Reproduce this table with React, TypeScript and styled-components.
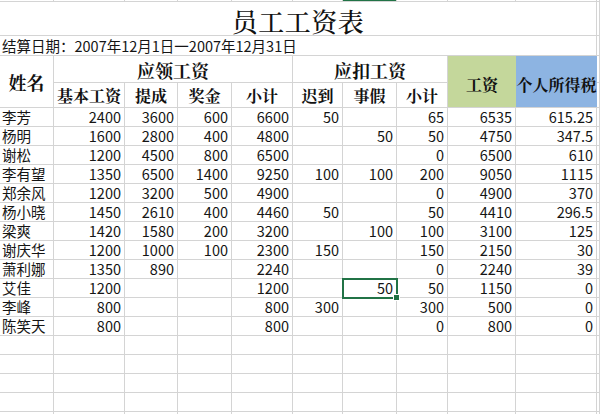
import React from "react";
import styled, { createGlobalStyle, css } from "styled-components";

const GlobalStyle = createGlobalStyle`
  html, body { margin: 0; padding: 0; background: #ffffff; }
  body {
    font-family: "Noto Sans CJK SC", "Noto Sans", sans-serif;
    color: #111111;
  }
`;

const GRID = "#d4d4d4";
const EXCEL_GREEN = "#217346";

const Sheet = styled.div`
  display: grid;
  grid-template-columns: 54px 71px 53px 54px 61px 50px 54px 51px 68px 81px 1fr;
  grid-template-rows: 2px 34px 20px 27px 25px repeat(17, 19px);
  width: 600px;
  height: 414px;
  overflow: hidden;
  background: #ffffff;
`;

type Align = "left" | "right" | "center";

const Cell = styled.div<{ $align?: Align; $selected?: boolean }>`
  box-sizing: border-box;
  border-right: 1px solid ${GRID};
  border-bottom: 1px solid ${GRID};
  display: flex;
  align-items: center;
  justify-content: ${(p) =>
    p.$align === "right" ? "flex-end" : p.$align === "center" ? "center" : "flex-start"};
  padding: ${(p) => (p.$align === "right" ? "1px 3px 0 0" : "1px 0 0 2px")};
  min-width: 0;
  white-space: nowrap;
  font-size: 14.5px;
  line-height: 1;
  color: #151515;
  ${(p) =>
    p.$selected &&
    css`
      position: relative;
      &::after {
        content: "";
        position: absolute;
        left: -1px;
        top: -1px;
        right: -2px;
        bottom: -2px;
        border: 2px solid ${EXCEL_GREEN};
        pointer-events: none;
      }
      &::before {
        content: "";
        position: absolute;
        right: -4px;
        bottom: -4px;
        width: 5px;
        height: 5px;
        background: ${EXCEL_GREEN};
        border: 1px solid #ffffff;
        z-index: 2;
      }
    `}
`;

const StripCell = styled.div<{ $active?: boolean }>`
  box-sizing: border-box;
  border-right: 1px solid ${GRID};
  border-bottom: 1px solid ${GRID};
  background: ${(p) => (p.$active ? EXCEL_GREEN : "#ffffff")};
`;

const TitleCell = styled.div`
  grid-column: 1 / 11;
  box-sizing: border-box;
  border-right: 1px solid ${GRID};
  border-bottom: 1px solid ${GRID};
  display: flex;
  align-items: center;
  justify-content: center;
  padding-top: 3px;
  font-family: "Noto Serif CJK SC", "Noto Sans CJK SC", serif;
  font-size: 26px;
  font-weight: 500;
  letter-spacing: 0.5px;
  color: #111;
`;

const DateCell = styled.div`
  grid-column: 1 / 11;
  box-sizing: border-box;
  border-right: 1px solid ${GRID};
  border-bottom: 1px solid ${GRID};
  display: flex;
  align-items: center;
  padding: 2px 0 0 2px;
  font-size: 14.5px;
  line-height: 1;
  white-space: nowrap;
  color: #151515;
`;

const HeadCell = styled.div<{ $size: number; $rows?: number; $cols?: number; $bg?: string; $shift?: number }>`
  box-sizing: border-box;
  grid-row: span ${(p) => p.$rows ?? 1};
  grid-column: span ${(p) => p.$cols ?? 1};
  border-right: 1px solid ${(p) => (p.$bg ? "transparent" : GRID)};
  border-bottom: 1px solid ${GRID};
  background: ${(p) => p.$bg ?? "#ffffff"};
  background-clip: padding-box;
  display: flex;
  align-items: center;
  justify-content: center;
  padding-top: ${(p) => p.$shift ?? 0}px;
  font-family: "Noto Serif CJK SC", "Noto Sans CJK SC", serif;
  font-weight: 700;
  font-size: ${(p) => p.$size}px;
  line-height: 1;
  white-space: nowrap;
  color: #111;
`;

const FilledHead = styled(HeadCell)`
  border-right: none;
  background-clip: border-box;
`;

type Row = [string, ...(number | string | null)[]];

const rows: Row[] = [
  ["李芳", 2400, 3600, 600, 6600, 50, null, 65, 6535, "615.25"],
  ["杨明", 1600, 2800, 400, 4800, null, 50, 50, 4750, "347.5"],
  ["谢松", 1200, 4500, 800, 6500, null, null, 0, 6500, 610],
  ["李有望", 1350, 6500, 1400, 9250, 100, 100, 200, 9050, 1115],
  ["郑余风", 1200, 3200, 500, 4900, null, null, 0, 4900, 370],
  ["杨小晓", 1450, 2610, 400, 4460, 50, null, 50, 4410, "296.5"],
  ["梁爽", 1420, 1580, 200, 3200, null, 100, 100, 3100, 125],
  ["谢庆华", 1200, 1000, 100, 2300, 150, null, 150, 2150, 30],
  ["萧利娜", 1350, 890, null, 2240, null, null, 0, 2240, 39],
  ["艾佳", 1200, null, null, 1200, null, 50, 50, 1150, 0],
  ["李峰", 800, null, null, 800, 300, null, 300, 500, 0],
  ["陈笑天", 800, null, null, 800, null, null, 0, 800, 0],
];

const COLS = 11;

export default function App() {
  return (
    <>
      <GlobalStyle />
      <Sheet>
        {Array.from({ length: COLS }).map((_, i) => (
          <StripCell key={`s${i}`} $active={i === 6} />
        ))}

        <TitleCell>员工工资表</TitleCell>
        <Cell />

        <DateCell>结算日期：2007年12月1日一2007年12月31日</DateCell>
        <Cell />

        <HeadCell $size={18} $rows={2}>姓名</HeadCell>
        <HeadCell $size={18} $cols={4} $shift={1}>应领工资</HeadCell>
        <HeadCell $size={18} $cols={3} $shift={1}>应扣工资</HeadCell>
        <FilledHead $size={16} $rows={2} $bg="#c4d79b" $shift={6}>工资</FilledHead>
        <FilledHead $size={16} $rows={2} $bg="#8db4e2" $shift={6}>个人所得税</FilledHead>
        <Cell />
        <HeadCell $size={16} $shift={2}>基本工资</HeadCell>
        <HeadCell $size={16} $shift={2}>提成</HeadCell>
        <HeadCell $size={16} $shift={2}>奖金</HeadCell>
        <HeadCell $size={16} $shift={2}>小计</HeadCell>
        <HeadCell $size={16} $shift={2}>迟到</HeadCell>
        <HeadCell $size={16} $shift={2}>事假</HeadCell>
        <HeadCell $size={16} $shift={2}>小计</HeadCell>
        <Cell />

        {rows.map((r, ri) => (
          <React.Fragment key={`r${ri}`}>
            <Cell $align="left">{r[0]}</Cell>
            {r.slice(1).map((v, ci) => (
              <Cell key={ci} $align="right" $selected={ri === 9 && ci === 5}>
                {v === null ? "" : String(v)}
              </Cell>
            ))}
            <Cell />
          </React.Fragment>
        ))}

        {Array.from({ length: 5 * COLS }).map((_, i) => (
          <Cell key={`e${i}`} />
        ))}
      </Sheet>
    </>
  );
}
